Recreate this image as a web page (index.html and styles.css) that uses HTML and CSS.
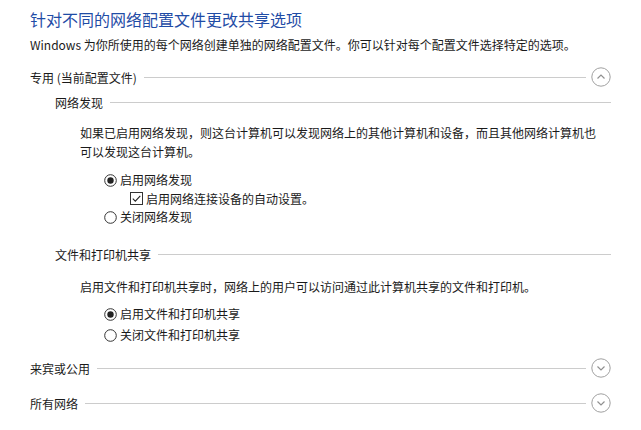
FILE: index.html
```html
<!DOCTYPE html>
<html lang="zh-CN">
<head>
<meta charset="utf-8">
<link rel="stylesheet" href="styles.css">
</head>
<body>
<div class="page">
  <h1 class="title">针对不同的网络配置文件更改共享选项</h1>
  <p class="intro">Windows 为你所使用的每个网络创建单独的网络配置文件。你可以针对每个配置文件选择特定的选项。</p>

  <div class="group-head first">
    <span class="group-label">专用 (当前配置文件)</span>
    <span class="rule"></span>
    <svg class="chev" width="20" height="20" viewBox="0 0 20 20"><circle cx="10" cy="10" r="9.2" fill="none" stroke="#a0a0a0" stroke-width="1"/><path d="M6.5 11.5 L10 8 L13.5 11.5" fill="none" stroke="#909090" stroke-width="1.2"/></svg>
  </div>

  <div class="sub">
    <div class="sub-head"><span>网络发现</span><span class="rule"></span></div>
    <p class="desc">如果已启用网络发现，则这台计算机可以发现网络上的其他计算机和设备，而且其他网络计算机也可以发现这台计算机。</p>
    <div class="options opts-a">
      <label class="opt"><svg class="radio" width="13" height="13" viewBox="0 0 13 13"><circle cx="6.5" cy="6.5" r="5.8" fill="#fff" stroke="#333" stroke-width="1"/><circle cx="6.5" cy="6.5" r="3.2" fill="#222"/></svg>启用网络发现</label>
      <label class="opt check"><svg class="box" width="13" height="13" viewBox="0 0 13 13"><rect x="0.5" y="0.5" width="12" height="12" fill="#fff" stroke="#333" stroke-width="1"/><path d="M2.8 6.6 L5.3 9.1 L10.3 3.8" fill="none" stroke="#222" stroke-width="1.1"/></svg>启用网络连接设备的自动设置。</label>
      <label class="opt"><svg class="radio" width="13" height="13" viewBox="0 0 13 13"><circle cx="6.5" cy="6.5" r="5.8" fill="#fff" stroke="#333" stroke-width="1"/></svg>关闭网络发现</label>
    </div>

    <div class="sub-head second"><span>文件和打印机共享</span><span class="rule"></span></div>
    <p class="desc one">启用文件和打印机共享时，网络上的用户可以访问通过此计算机共享的文件和打印机。</p>
    <div class="options opts-b">
      <label class="opt"><svg class="radio" width="13" height="13" viewBox="0 0 13 13"><circle cx="6.5" cy="6.5" r="5.8" fill="#fff" stroke="#333" stroke-width="1"/><circle cx="6.5" cy="6.5" r="3.2" fill="#222"/></svg>启用文件和打印机共享</label>
      <label class="opt"><svg class="radio" width="13" height="13" viewBox="0 0 13 13"><circle cx="6.5" cy="6.5" r="5.8" fill="#fff" stroke="#333" stroke-width="1"/></svg>关闭文件和打印机共享</label>
    </div>
  </div>

  <div class="group-head guest">
    <span class="group-label">来宾或公用</span>
    <span class="rule"></span>
    <svg class="chev" width="20" height="20" viewBox="0 0 20 20"><circle cx="10" cy="10" r="9.2" fill="none" stroke="#a0a0a0" stroke-width="1"/><path d="M6.5 8.5 L10 12 L13.5 8.5" fill="none" stroke="#909090" stroke-width="1.2"/></svg>
  </div>

  <div class="group-head">
    <span class="group-label">所有网络</span>
    <span class="rule"></span>
    <svg class="chev" width="20" height="20" viewBox="0 0 20 20"><circle cx="10" cy="10" r="9.2" fill="none" stroke="#a0a0a0" stroke-width="1"/><path d="M6.5 8.5 L10 12 L13.5 8.5" fill="none" stroke="#909090" stroke-width="1.2"/></svg>
  </div>
</div>
</body>
</html>
```

FILE: styles.css
```css
html, body {
  margin: 0;
  padding: 0;
  background: #ffffff;
}
body {
  font-family: "Noto Sans CJK SC", "Noto Sans", sans-serif;
  font-size: 12px;
  color: #1a1a1a;
}
.page {
  padding: 8px 30px 0 30px;
}
.title {
  margin: 0;
  font-size: 16px;
  font-weight: normal;
  line-height: 22px;
  color: #1f4ca6;
}
.intro {
  margin: 5px 0 0 0;
  line-height: 20px;
}
.group-head {
  display: flex;
  align-items: center;
  height: 20px;
  margin-top: 15px;
}
.group-head.first {
  margin-top: 12px;
}
.group-head.guest {
  margin-top: 14px;
}
.rule {
  flex: 1;
  height: 0;
  border-top: 1px solid #cccccc;
  margin-left: 7px;
}
.chev {
  display: block;
  margin-left: 5px;
  flex: none;
}
.sub {
  padding-left: 25px;
}
.sub-head {
  display: flex;
  align-items: center;
  height: 20px;
  margin-top: 5px;
}
.sub-head.second {
  margin-top: 18px;
}
.desc {
  margin: 11px 0 0 25px;
  max-width: 522px;
  line-height: 19px;
}
.desc.one {
  margin-top: 13px;
  max-width: none;
}
.options {
  display: flex;
  flex-direction: column;
  padding-left: 49px;
}
.opts-a {
  margin-top: 10px;
}
.opts-b {
  margin-top: 9px;
  gap: 3px;
}
.opt {
  display: flex;
  align-items: center;
  height: 18px;
  line-height: 18px;
}
.opt.check {
  padding-left: 26px;
  height: 19px;
}
.radio, .box {
  display: block;
  flex: none;
  margin-right: 3px;
}
```
